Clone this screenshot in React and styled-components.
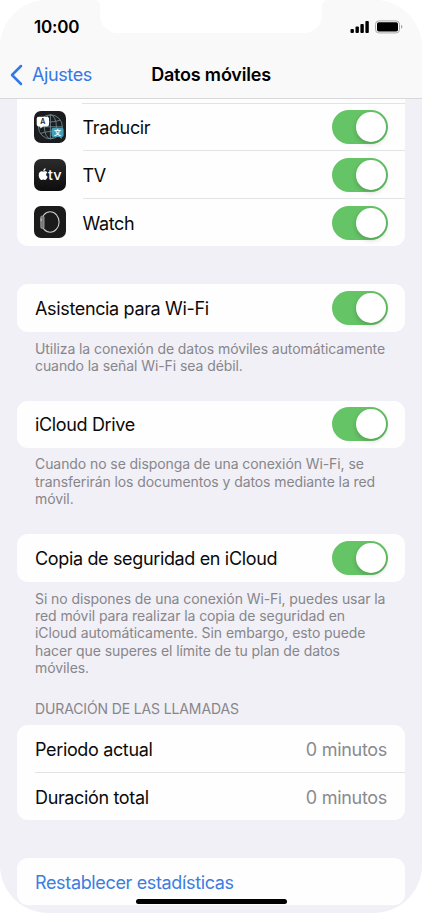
import styled, { createGlobalStyle } from "styled-components"

const aplicaciones = [
    { nombre: "Traducir", icono: <IconoTraducir />, alto: 47 },
    { nombre: "TV", icono: <IconoTV />, alto: 48 },
    { nombre: "Watch", icono: <IconoWatch />, alto: 47, ultimo: true },
]

const opciones = [
    {
        nombre: "Asistencia para Wi-Fi",
        alto: 48,
        margen: 38,
        nota: [
            "Utiliza la conexión de datos móviles automáticamente",
            "cuando la señal Wi-Fi sea débil.",
        ],
    },
    {
        nombre: "iCloud Drive",
        alto: 47,
        margen: 26,
        nota: [
            "Cuando no se disponga de una conexión Wi-Fi, se",
            "transferirán los documentos y datos mediante la red",
            "móvil.",
        ],
    },
    {
        nombre: "Copia de seguridad en iCloud",
        alto: 48,
        margen: 26,
        nota: [
            "Si no dispones de una conexión Wi-Fi, puedes usar la",
            "red móvil para realizar la copia de seguridad en",
            "iCloud automáticamente. Sin embargo, esto puede",
            "hacer que superes el límite de tu plan de datos",
            "móviles.",
        ],
    },
]

export default function App() {
    return (
        <>
            <GlobalStyle />
            <Pantalla>
                <Cabecera>
                    <Muesca />
                    <BarraEstado>
                        <Hora>10:00</Hora>
                        <Indicadores />
                    </BarraEstado>
                    <Navegacion>
                        <Volver>
                            <svg width="13" height="22" viewBox="0 0 13 22">
                                <path d="M11 2 L2 11 L11 20" fill="none" stroke="#3478e5" strokeWidth="2.5" strokeLinecap="round" strokeLinejoin="round" />
                            </svg>
                            <span>Ajustes</span>
                        </Volver>
                        <Titulo>Datos móviles</Titulo>
                    </Navegacion>
                </Cabecera>
                <Contenido>
                    <Tarjeta $cortada>
                        <Resto />
                        {aplicaciones.map((app) => (
                            <Fila key={app.nombre} $alto={app.alto}>
                                <Icono>{app.icono}</Icono>
                                <Cuerpo $linea={!app.ultimo}>
                                    <Nombre>{app.nombre}</Nombre>
                                    <Interruptor />
                                </Cuerpo>
                            </Fila>
                        ))}
                    </Tarjeta>
                    {opciones.map((opcion) => (
                        <section key={opcion.nombre}>
                            <Tarjeta $margen={opcion.margen}>
                                <Fila $alto={opcion.alto}>
                                    <Cuerpo>
                                        <Nombre>{opcion.nombre}</Nombre>
                                        <Interruptor />
                                    </Cuerpo>
                                </Fila>
                            </Tarjeta>
                            <Nota>
                                {opcion.nota.map((linea) => <span key={linea}>{linea}</span>)}
                            </Nota>
                        </section>
                    ))}
                    <Encabezado>DURACIÓN DE LAS LLAMADAS</Encabezado>
                    <Tarjeta>
                        <Fila $alto={48}>
                            <Cuerpo $linea>
                                <Nombre>Periodo actual</Nombre>
                                <Valor>0 minutos</Valor>
                            </Cuerpo>
                        </Fila>
                        <Fila $alto={47}>
                            <Cuerpo>
                                <Nombre>Duración total</Nombre>
                                <Valor>0 minutos</Valor>
                            </Cuerpo>
                        </Fila>
                    </Tarjeta>
                    <Tarjeta $margen={38}>
                        <Fila $alto={47}>
                            <Cuerpo>
                                <Nombre $azul>Restablecer estadísticas</Nombre>
                            </Cuerpo>
                        </Fila>
                    </Tarjeta>
                </Contenido>
                <BarraInicio />
            </Pantalla>
        </>
    )
}

function Interruptor() {
    return <Pista><Boton /></Pista>
}

function Indicadores() {
    return (
        <svg width="54" height="14" viewBox="0 0 54 14">
            <rect x="0.5" y="9" width="3.4" height="4" rx="1" />
            <rect x="5.5" y="6.6" width="3.4" height="6.4" rx="1" />
            <rect x="10.4" y="4" width="3.4" height="9" rx="1" />
            <rect x="15.4" y="1" width="3.4" height="12" rx="1" />
            <rect x="25.5" y="0.9" width="24" height="12" rx="3.4" fill="none" stroke="#a9a9a9" />
            <rect x="27" y="2.3" width="21" height="9.2" rx="1.8" />
            <path d="M51 4.8 Q52.4 5.4 52.4 6.8 Q52.4 8.2 51 8.8 Z" fill="#a9a9a9" />
        </svg>
    )
}

function IconoTraducir() {
    return (
        <svg width="32" height="32" viewBox="0 0 32 32">
            <rect width="32" height="32" rx="7" fill="#1b1c1e" />
            <g fill="none" stroke="#6d8790" strokeWidth="0.9">
                <circle cx="16.4" cy="15.8" r="12" />
                <ellipse cx="16.4" cy="15.8" rx="6" ry="12" />
                <path d="M16.4 3.8V27.8M4.4 15.8H28.4M6.5 9Q16.4 13 26.5 9M6.5 22.5Q16.4 18.5 26.5 22.5" />
            </g>
            <path d="M4.5 5.8H13.2Q15 5.8 15 7.6V13.6Q15 15.4 13.2 15.4H9L6.3 17.4V15.4H4.5Q2.7 15.4 2.7 13.6V7.6Q2.7 5.8 4.5 5.8Z" fill="#fff" />
            <path d="M19.3 16.8H27.8Q29.6 16.8 29.6 18.6V24.2Q29.6 26 27.8 26V28L25.2 26H19.3Q17.5 26 17.5 24.2V18.6Q17.5 16.8 19.3 16.8Z" fill="#459fb8" />
            <LetraIcono x="8.8" y="13.2" fill="#222" fontSize="7">A</LetraIcono>
            <LetraIcono x="23.5" y="24.2" fill="#fff" fontSize="7">文</LetraIcono>
        </svg>
    )
}

function IconoTV() {
    return (
        <svg width="32" height="32" viewBox="0 0 32 32">
            <defs>
                <linearGradient id="fondoTV" x1="0" y1="0" x2="0" y2="1">
                    <stop offset="0" stopColor="#2b2b2b" />
                    <stop offset="1" stopColor="#0d0d0d" />
                </linearGradient>
            </defs>
            <rect width="32" height="32" rx="7" fill="url(#fondoTV)" />
            <path d="M9.7 12.6C10.8 12.2 12.4 12 13.3 13.4C11.6 14.6 11.8 17 13.7 17.8C13 19.7 12 21 11 21C10.3 21 10 20.6 9.3 20.6C8.6 20.6 8.2 21 7.6 21C6.2 21 4.7 18.4 4.7 16C4.7 13.5 6.3 12.3 7.7 12.3C8.6 12.3 9 12.6 9.7 12.6ZM9.3 12.1C9.2 10.7 10.2 9.5 11.6 9.3C11.7 10.8 10.7 12 9.3 12.1Z" fill="#fff" />
            <LetraIcono x="20.9" y="20.9" fill="#fff" fontSize="14.5" $fina>tv</LetraIcono>
        </svg>
    )
}

function IconoWatch() {
    return (
        <svg width="32" height="32" viewBox="0 0 32 32">
            <rect width="32" height="32" rx="7" fill="#1b1b1c" />
            <ellipse cx="16.2" cy="16" rx="8.9" ry="10.2" fill="none" stroke="#c9c9c9" strokeWidth="1.1" />
            <rect x="6.7" y="10" width="3.4" height="12.4" rx="1.3" fill="#77797a" stroke="#b5b5b5" strokeWidth="0.6" />
            <path d="M7.1 12.5V15" stroke="#e5e5e5" strokeWidth="0.8" />
        </svg>
    )
}

const GlobalStyle = createGlobalStyle`
*{
    box-sizing: border-box;
}
body{
    margin: 0;
    background-color: #fff;
    font-family: Inter, "Noto Sans CJK SC", sans-serif;
    overflow: hidden;
}
`

const Pantalla = styled.div`
position: relative;
width: 422px;
height: 913px;
border-radius: 48px;
background-color: #f1f0f6;
overflow: hidden;
`

const Cabecera = styled.header`
position: relative;
height: 99px;
background-color: #f9f9f9;
border-bottom: 1px solid #d8d8da;
`

const Muesca = styled.div`
position: absolute;
top: 0;
left: 100px;
width: 222px;
height: 33px;
border-radius: 0 0 18px 18px;
background-color: #fff;
&::before, &::after{
    content: "";
    position: absolute;
    top: 0;
    width: 5px;
    height: 5px;
}
&::before{
    left: -5px;
    background: radial-gradient(circle at 0 100%, transparent 4.5px, #fff 5px);
}
&::after{
    right: -5px;
    background: radial-gradient(circle at 100% 100%, transparent 4.5px, #fff 5px);
}
`

const BarraEstado = styled.div`
display: flex;
justify-content: space-between;
align-items: center;
height: 53px;
padding: 0 18px 0 34px;
`

const Hora = styled.span`
font-size: 17px;
font-weight: 600;
letter-spacing: -0.2px;
`

const Navegacion = styled.nav`
display: grid;
grid-template-columns: 1fr auto 1fr;
align-items: center;
height: 43px;
padding: 0 10px;
`

const Volver = styled.div`
display: flex;
align-items: center;
gap: 9px;
color: #3478e5;
font-size: 18px;
letter-spacing: -0.4px;
`

const Titulo = styled.h1`
margin: 0;
font-size: 18px;
font-weight: 600;
letter-spacing: -0.2px;
`

const Contenido = styled.main`
padding: 0 17px;
`

const Tarjeta = styled.div`
margin-top: ${(props) => props.$margen || 0}px;
border-radius: ${(props) => (props.$cortada ? "0 0 11px 11px" : "11px")};
background-color: #fefefe;
`

const Resto = styled.div`
height: 5px;
margin-left: 65px;
border-bottom: 1px solid #e3e3e5;
`

const Fila = styled.div`
display: flex;
height: ${(props) => props.$alto}px;
padding-left: 18px;
`

const Icono = styled.div`
display: flex;
align-items: center;
width: 47.5px;
padding-bottom: 1px;
svg{
    margin-left: -0.7px;
}
`

const Cuerpo = styled.div`
display: flex;
flex: 1;
justify-content: space-between;
align-items: center;
padding-right: 18px;
border-bottom: ${(props) => (props.$linea ? "1px solid #e3e3e5" : "none")};
`

const Nombre = styled.span`
padding-top: 1px;
font-size: 18px;
letter-spacing: -0.35px;
white-space: nowrap;
color: ${(props) => (props.$azul ? "#3d7de0" : "#0a0a0a")};
`

const Valor = styled.span`
padding-top: 1px;
font-size: 18px;
letter-spacing: -0.3px;
color: #8a8a8e;
`

const Pista = styled.div`
display: flex;
justify-content: flex-end;
width: 56px;
height: 34px;
margin-right: -1px;
padding: 2px;
border-radius: 17px;
background-color: #65c466;
`

const Boton = styled.div`
width: 30px;
height: 30px;
border-radius: 50%;
background-color: #fff;
box-shadow: 0 2px 5px rgba(0, 0, 0, 0.2);
`

const Nota = styled.p`
margin: 7.5px 0 0;
padding: 0 0 0.5px 18px;
font-size: 14px;
line-height: 17.4px;
letter-spacing: -0.08px;
color: #87868b;
span{
    display: block;
    white-space: nowrap;
}
`

const Encabezado = styled.h2`
margin: 23px 0 7px;
padding-left: 18px;
font-size: 14px;
font-weight: 400;
line-height: 18px;
letter-spacing: -0.13px;
color: #87868b;
`

const BarraInicio = styled.div`
position: absolute;
bottom: 9px;
left: 136px;
width: 151px;
height: 5px;
border-radius: 3px;
background-color: #000;
`

const LetraIcono = styled.text`
font-family: Inter, "Noto Sans CJK SC", sans-serif;
font-weight: ${(props) => (props.$fina ? 500 : 600)};
text-anchor: middle;
`
